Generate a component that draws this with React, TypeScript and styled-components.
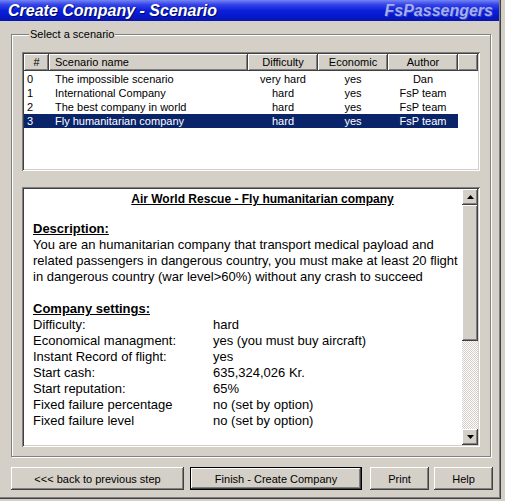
import React from "react";
import styled, { createGlobalStyle, css } from "styled-components";

const GlobalStyle = createGlobalStyle`
  html, body { margin: 0; padding: 0; background: #d4d0c8; }
  body { font-family: "Liberation Sans", Arial, sans-serif; color: #000; }
  * { box-sizing: border-box; }
`;

const raised = css`
  background: #d4d0c8;
  box-shadow: inset -1px -1px 0 #404040, inset 1px 1px 0 #fff,
    inset -2px -2px 0 #808080, inset 2px 2px 0 #d4d0c8;
`;

const sunken = css`
  box-shadow: inset 1px 1px 0 #808080, inset -1px -1px 0 #fff,
    inset 2px 2px 0 #404040, inset -2px -2px 0 #d4d0c8;
`;

const Window = styled.div`
  width: 501px;
  height: 499px;
  display: flex;
  flex-direction: column;
  background: #d4d0c8;
  box-shadow: inset -1px -1px 0 #404040, inset -2px -2px 0 #808080;
`;

const TitleBar = styled.div`
  height: 21px;
  width: 499px;
  flex: none;
  display: flex;
  align-items: center;
  justify-content: space-between;
  padding: 0 6px 0 8px;
  background: linear-gradient(
    to bottom,
    #7484f4 0%,
    #3444e8 22%,
    #0c20dc 50%,
    #0618cc 78%,
    #0a14a8 100%
  );
`;

const TitleText = styled.span<{ $muted?: boolean }>`
  font-family: "Liberation Sans", Arial, sans-serif;
  font-weight: bold;
  font-style: italic;
  font-size: 16px;
  line-height: 21px;
  white-space: nowrap;
  color: ${(p) => (p.$muted ? "#a6aeec" : "#fff")};
  text-shadow: ${(p) =>
    p.$muted ? "1px 1px 0 #3040c8" : "1px 1px 0 #000860, 1px 0 0 #1020a0"};
`;

const Body = styled.div`
  padding: 6px 0 0 11px;
  display: flex;
  flex-direction: column;
`;

const Group = styled.fieldset`
  display: block;
  width: 480px;
  margin: 0;
  padding: 11px 10px 9px 10px;
  border: 1px solid #808080;
  box-shadow: inset 1px 1px 0 #fff, 1px 1px 0 #fff;
`;

const GroupInner = styled.div`
  display: flex;
  flex-direction: column;
  gap: 16px;
`;

const Legend = styled.legend`
  display: block;
  font-size: 11px;
  line-height: 14px;
  padding: 0 1px;
  margin: 0 0 0 7px;
  background: #d4d0c8;
`;

const ListBox = styled.div`
  height: 119px;
  padding: 2px;
  background: #fff;
  ${sunken};
`;

const HeaderRow = styled.div`
  display: grid;
  grid-template-columns: 25px 199px 70px 70px 70px 1fr;
  height: 17px;
`;

const HeaderCell = styled.div<{ $align?: "left" | "center" }>`
  ${raised};
  font-size: 11px;
  line-height: 17px;
  text-align: ${(p) => p.$align ?? "center"};
  padding-left: ${(p) => (p.$align === "left" ? "6px" : "0")};
  white-space: nowrap;
  overflow: hidden;
`;

const Rows = styled.div`
  padding-top: 1px;
`;

const Row = styled.div<{ $selected?: boolean }>`
  display: grid;
  grid-template-columns: 25px 199px 70px 70px 70px;
  width: 434px;
  height: 14px;
  font-size: 11px;
  line-height: 14px;
  background: ${(p) => (p.$selected ? "#0a246a" : "transparent")};
  color: ${(p) => (p.$selected ? "#fff" : "#000")};
`;

const Cell = styled.div<{ $align?: "left" | "center"; $pad?: number }>`
  text-align: ${(p) => p.$align ?? "center"};
  padding-left: ${(p) => p.$pad ?? 0}px;
  white-space: nowrap;
  overflow: hidden;
`;

const TextPanel = styled.div`
  height: 260px;
  padding: 2px;
  background: #fff;
  display: flex;
  ${sunken};
`;

const TextContent = styled.div`
  flex: 1;
  overflow: hidden;
  padding: 2px 0 0 9px;
  font-size: 13px;
  line-height: 16px;
`;

const DocTitle = styled.div`
  font-size: 12px;
  font-weight: bold;
  text-decoration: underline;
  text-align: center;
  padding-left: 30px;
  white-space: nowrap;
`;

const Heading = styled.div<{ $gap: number }>`
  margin-top: ${(p) => p.$gap}px;
  font-weight: bold;
  text-decoration: underline;
  white-space: nowrap;
`;

const Line = styled.div`
  white-space: nowrap;
`;

const Settings = styled.div`
  display: grid;
  grid-template-columns: 180px auto;
  white-space: nowrap;
`;

const ScrollBar = styled.div`
  width: 16px;
  flex: none;
  display: flex;
  flex-direction: column;
`;

const ArrowButton = styled.div`
  height: 16px;
  flex: none;
  display: flex;
  align-items: center;
  justify-content: center;
  ${raised};
`;

const Thumb = styled.div`
  height: 136px;
  flex: none;
  ${raised};
`;

const Track = styled.div`
  flex: 1;
  background: repeating-conic-gradient(#d4d0c8 0% 25%, #fff 0% 50%) 0 0 / 2px
    2px;
`;

const ButtonRow = styled.div`
  display: flex;
  margin-top: 10px;
  height: 23px;
`;

const Button = styled.button<{ $w: number; $ml?: number; $default?: boolean }>`
  width: ${(p) => p.$w}px;
  margin-left: ${(p) => p.$ml ?? 0}px;
  height: 23px;
  border: none;
  padding: 0;
  font-family: "Liberation Sans", Arial, sans-serif;
  font-size: 11px;
  color: #000;
  ${raised};
  ${(p) =>
    p.$default &&
    css`
      box-shadow: inset 0 0 0 1px #000, inset -2px -2px 0 #404040,
        inset 2px 2px 0 #fff, inset -3px -3px 0 #808080;
    `}
`;

const Arrow = ({ up }: { up?: boolean }) => (
  <svg width="7" height="4" viewBox="0 0 7 4">
    <path d={up ? "M3.5 0 L7 4 L0 4 Z" : "M0 0 L7 0 L3.5 4 Z"} fill="#000" />
  </svg>
);

const scenarios = [
  { id: "0", name: "The impossible scenario", diff: "very hard", eco: "yes", author: "Dan" },
  { id: "1", name: "International Company", diff: "hard", eco: "yes", author: "FsP team" },
  { id: "2", name: "The best company in world", diff: "hard", eco: "yes", author: "FsP team" },
  { id: "3", name: "Fly humanitarian company", diff: "hard", eco: "yes", author: "FsP team" },
];

const settings: [string, string][] = [
  ["Difficulty:", "hard"],
  ["Economical managment:", "yes (you must buy aircraft)"],
  ["Instant Record of flight:", "yes"],
  ["Start cash:", "635,324,026 Kr."],
  ["Start reputation:", "65%"],
  ["Fixed failure percentage", "no (set by option)"],
  ["Fixed failure level", "no (set by option)"],
];

export default function App() {
  return (
    <>
      <GlobalStyle />
      <Window>
        <TitleBar>
          <TitleText>Create Company - Scenario</TitleText>
          <TitleText $muted>FsPassengers</TitleText>
        </TitleBar>
        <Body>
          <Group>
            <Legend>Select a scenario</Legend>
            <GroupInner>
              <ListBox>
                <HeaderRow>
                  <HeaderCell>#</HeaderCell>
                  <HeaderCell $align="left">Scenario name</HeaderCell>
                  <HeaderCell>Difficulty</HeaderCell>
                  <HeaderCell>Economic</HeaderCell>
                  <HeaderCell>Author</HeaderCell>
                  <HeaderCell />
                </HeaderRow>
                <Rows>
                  {scenarios.map((s) => (
                    <Row key={s.id} $selected={s.id === "3"}>
                      <Cell $align="left" $pad={3}>{s.id}</Cell>
                      <Cell $align="left" $pad={6}>{s.name}</Cell>
                      <Cell>{s.diff}</Cell>
                      <Cell>{s.eco}</Cell>
                      <Cell>{s.author}</Cell>
                    </Row>
                  ))}
                </Rows>
              </ListBox>
              <TextPanel>
                <TextContent>
                  <DocTitle>Air World Rescue - Fly humanitarian company</DocTitle>
                  <Heading $gap={14}>Description:</Heading>
                  <Line>You are an humanitarian company that transport medical payload and</Line>
                  <Line>related passengers in dangerous country, you must make at least 20 flight</Line>
                  <Line>in dangerous country (war level&gt;60%) without any crash to succeed</Line>
                  <Heading $gap={16}>Company settings:</Heading>
                  <Settings>
                    {settings.map(([k, v]) => (
                      <React.Fragment key={k}>
                        <span>{k}</span>
                        <span>{v}</span>
                      </React.Fragment>
                    ))}
                  </Settings>
                </TextContent>
                <ScrollBar>
                  <ArrowButton>
                    <Arrow up />
                  </ArrowButton>
                  <Thumb />
                  <Track />
                  <ArrowButton>
                    <Arrow />
                  </ArrowButton>
                </ScrollBar>
              </TextPanel>
            </GroupInner>
          </Group>
          <ButtonRow>
            <Button $w={173}>&lt;&lt;&lt; back to previous step</Button>
            <Button $w={172} $ml={6} $default>
              Finish - Create Company
            </Button>
            <Button $w={59} $ml={8}>Print</Button>
            <Button $w={59} $ml={5}>Help</Button>
          </ButtonRow>
        </Body>
      </Window>
    </>
  );
}
